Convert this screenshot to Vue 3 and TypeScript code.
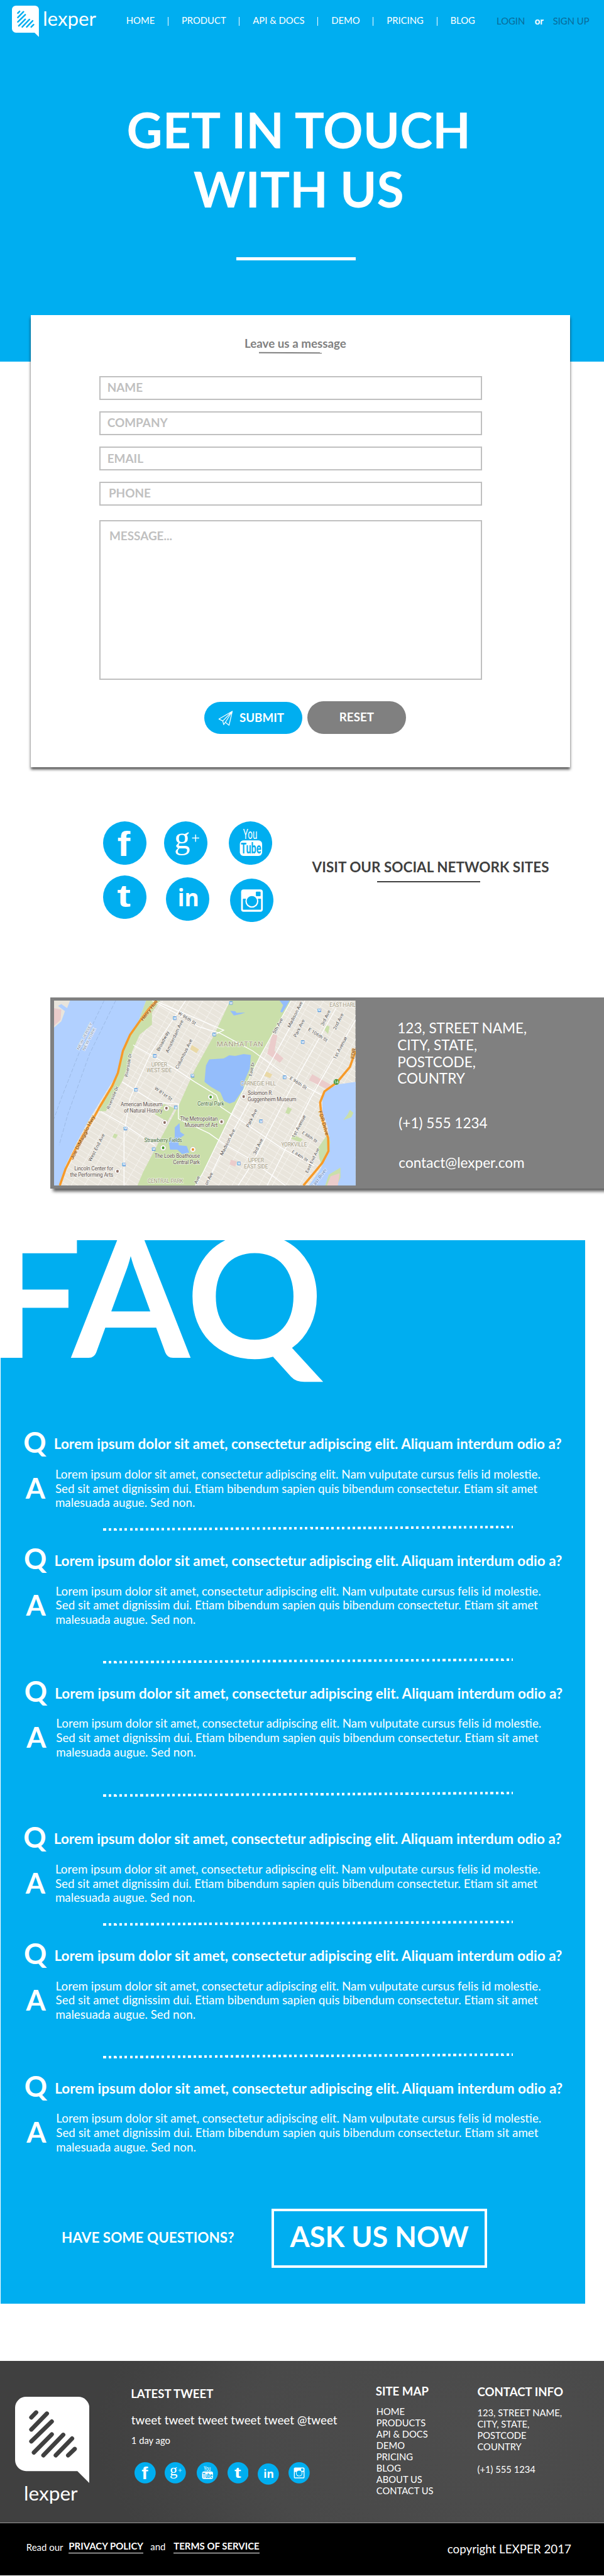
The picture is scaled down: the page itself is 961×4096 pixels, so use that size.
<script setup lang="ts">
import { defineComponent, h } from 'vue'

type Point = [number, number]
interface MapLabel {
  text: string
  from: Point
  to: Point
  tone: string
  size: number
}
interface Place {
  lines: string[]
  x: number
  y: number
  anchor: 'start' | 'middle' | 'end'
  tone: string
}

const nav: string[] = ['HOME', 'PRODUCT', 'API & DOCS', 'DEMO', 'PRICING', 'BLOG']
const fields: string[] = ['NAME', 'COMPANY', 'EMAIL', 'PHONE']
const networks: string[] = ['facebook', 'google', 'youtube', 'tumblr', 'linkedin', 'instagram']
const siteMap: string[] = ['HOME', 'PRODUCTS', 'API & DOCS', 'DEMO', 'PRICING', 'BLOG', 'ABOUT US', 'CONTACT US']
const spacing: string[] = ['tight', 'loose', 'wide', 'tight', 'loose', 'last']
const question = 'Lorem ipsum dolor sit amet, consectetur adipiscing elit. Aliquam interdum odio a?'
const answer: string[] = [
  'Lorem ipsum dolor sit amet, consectetur adipiscing elit. Nam vulputate cursus felis id molestie.',
  'Sed sit amet dignissim dui. Etiam bibendum sapien quis bibendum consectetur. Etiam sit amet',
  'malesuada augue. Sed non.',
]

const blue = '#00aef0'
const stripes: [number, number, number, number][] = [
  [36.7, 46.8, 47.7, 35.5],
  [36.7, 74, 72, 38],
  [36.7, 101, 83, 56],
  [42.5, 126, 83, 85],
  [64, 132.5, 109, 86],
  [92, 132.5, 129, 94.5],
  [120, 132.5, 135, 118],
]

const BubbleMark = defineComponent({
  props: { ink: { type: String, required: true } },
  setup(props) {
    return () =>
      h('svg', { viewBox: '0 0 168 195' }, [
        h('path', {
          d: 'M25 0H143A25 25 0 0 1 168 25V195L141 168H25A25 25 0 0 1 0 143V25A25 25 0 0 1 25 0Z',
          fill: '#fff',
        }),
        ...stripes.map(([x1, y1, x2, y2]) =>
          h('line', { x1, y1, x2, y2, stroke: props.ink, 'stroke-width': 9.6, 'stroke-linecap': 'round' }),
        ),
      ])
  },
})

const letter = (content: string, attrs: Record<string, string | number>) =>
  h('text', { fill: '#fff', ...attrs }, content)

const SocialIcon = defineComponent({
  props: { name: { type: String, required: true } },
  setup(props) {
    const art = () => {
      switch (props.name) {
        case 'facebook':
          return [letter('f', { transform: 'translate(97 235) scale(1.13 1)', 'font-family': 'Liberation Sans', 'font-weight': 700, 'font-size': 234 })]
        case 'google':
          return [
            letter('g', { x: 69, y: 181, 'font-family': 'Liberation Serif', 'font-size': 216 }),
            h('path', { d: 'M190 113H238M214 89V138', stroke: '#fff', 'stroke-width': 6 }),
          ]
        case 'youtube':
          return [
            letter('You', { x: 97, y: 118, 'font-family': 'Roboto', 'font-size': 92, textLength: 96, lengthAdjust: 'spacingAndGlyphs' }),
            h('rect', { x: 75, y: 129, width: 151, height: 105, rx: 24, fill: '#fff' }),
            letter('Tube', { x: 81, y: 216, fill: blue, 'font-family': 'Roboto', 'font-weight': 700, 'font-size': 99, textLength: 138, lengthAdjust: 'spacingAndGlyphs' }),
          ]
        case 'tumblr':
          return [letter('t', { transform: 'translate(96 215) scale(1.28 1)', 'font-family': 'Liberation Sans', 'font-weight': 700, 'font-size': 216 })]
        case 'linkedin':
          return [letter('in', { x: 80, y: 197, 'font-family': 'Open Sans', 'font-weight': 700, 'font-size': 158, textLength: 145, lengthAdjust: 'spacingAndGlyphs' })]
        default:
          return [
            h('rect', { x: 75, y: 73, width: 147, height: 152, rx: 17, fill: '#fff' }),
            h('rect', { x: 87, y: 136, width: 123, height: 75, rx: 3, fill: blue }),
            h('circle', { cx: 148, cy: 153, r: 44, fill: '#fff' }),
            h('circle', { cx: 148, cy: 153, r: 35, fill: blue }),
            h('rect', { x: 175, y: 88, width: 32, height: 31, rx: 5, fill: blue }),
          ]
      }
    }
    return () => h('svg', { viewBox: '0 0 294 294', role: 'img' }, [h('circle', { cx: 147, cy: 147, r: 147, fill: blue }), ...art()])
  },
})

// Map features are kept on a survey grid and projected onto the 682 x 418 canvas.
const project = ([x, y]: Point): Point => [(x - 52) * 0.8202, (y - 99) / 3]
const trace = (...points: Point[]): string =>
  'M' + points.map((p) => project(p).map((n) => n.toFixed(1)).join(' ')).join('L')

const streets: string[] = []
for (let y = -1100; y < 1400; y += 42) streets.push(trace([52, y], [884, y + 1260]))
const avenues: string[] = []
for (let x = 130; x < 1180; x += 37) avenues.push(trace([x, 99], [x - 290, 1353]))

const hudson = trace([52, 99], [306, 99], [285, 240], [250, 400], [228, 590], [185, 760], [150, 900], [115, 1060], [85, 1210], [66, 1353], [52, 1353])
const jersey = trace([52, 99], [96, 99], [88, 150], [72, 122], [63, 135], [82, 170], [72, 240], [52, 282])
const shore = trace([306, 99], [345, 99], [322, 180], [322, 262], [288, 330], [268, 440], [250, 590], [238, 655], [222, 720], [195, 850], [176, 850], [208, 690], [228, 590], [250, 400], [285, 240])
const park = trace([538, 99], [706, 99], [665, 290], [622, 470], [590, 640], [545, 850], [505, 1050], [462, 1270], [442, 1353], [282, 1353], [298, 1260], [345, 1040], [398, 800], [440, 570], [492, 340])
const reservoir = trace([480, 498], [520, 492], [535, 470], [552, 475], [575, 462], [595, 468], [592, 560], [578, 640], [574, 700], [550, 785], [536, 797], [521, 780], [511, 722], [485, 685], [467, 650], [471, 540])
const lake = trace([398, 930], [400, 990], [412, 1010], [395, 1040], [396, 1080], [418, 1085], [425, 1130], [405, 1140], [392, 1110], [372, 1110], [368, 1050], [385, 1030], [385, 960])
const meer = trace([674, 99], [702, 99], [692, 140], [682, 180], [676, 175], [684, 130])
const pool = trace([538, 168], [552, 172], [555, 182], [580, 180], [565, 192], [548, 200])
const eastRiver = trace([884, 650], [832, 668], [800, 712], [792, 760], [792, 850], [806, 950], [812, 1040], [808, 1140], [785, 1250], [755, 1353], [884, 1353])
const island = trace([842, 1232], [842, 1300], [832, 1353], [800, 1353], [810, 1280])
const promenade = trace([808, 1000], [814, 1060], [808, 1140], [790, 1220], [784, 1170], [780, 1100])

const westHighway = trace([335, 99], [312, 160], [288, 240], [262, 330], [242, 440], [228, 590], [212, 680], [178, 820], [160, 900], [132, 1010], [104, 1140], [84, 1240], [68, 1353])
const fdr = trace([884, 440], [868, 550], [832, 655], [798, 715], [786, 790], [790, 890], [808, 1030], [809, 1120], [792, 1200], [765, 1280], [740, 1353])
const mainRoads: string[] = [
  trace([322, 99], [400, 200], [450, 275], [510, 320], [600, 440], [700, 620], [790, 740]),
  trace([415, 99], [320, 450], [262, 760], [245, 1000], [245, 1353]),
  trace([240, 650], [330, 790], [395, 800], [395, 900], [480, 1000], [520, 1070], [590, 1170], [690, 1353]),
  trace([270, 400], [385, 560], [440, 650], [500, 740], [512, 820], [560, 900], [680, 1100], [770, 1220]),
  trace([180, 850], [245, 940], [330, 1080]),
  trace([706, 99], [622, 470], [545, 850], [462, 1270], [442, 1353]),
  trace([744, 99], [640, 560], [520, 1100], [470, 1353]),
  trace([830, 150], [700, 720], [600, 1200], [560, 1353]),
  trace([884, 230], [760, 760], [640, 1353]),
  trace([340, 110], [520, 300], [495, 330]),
]
const patches: { d: string; fill: string }[] = [
  { d: trace([52, 150], [72, 160], [70, 230], [52, 270]), fill: '#ebcccb' },
  { d: trace([654, 325], [668, 335], [660, 440], [685, 490], [675, 520], [640, 460]), fill: '#ebcccb' },
  { d: trace([764, 598], [815, 670], [805, 700], [755, 640]), fill: '#ebcccb' },
  { d: trace([540, 1178], [556, 1190], [552, 1225], [536, 1210]), fill: '#ebcccb' },
  { d: trace([815, 1290], [840, 1270], [835, 1353], [805, 1353]), fill: '#ebcccb' },
  { d: trace([432, 400], [452, 430], [445, 455], [428, 430]), fill: '#ead9a6' },
  { d: trace([638, 580], [654, 600], [648, 625], [632, 610]), fill: '#ead9a6' },
  { d: trace([355, 800], [385, 830], [365, 920], [330, 870]), fill: '#cadfaa' },
  { d: trace([697, 820], [708, 835], [700, 870], [690, 860]), fill: '#cadfaa' },
  { d: trace([218, 1000], [228, 1010], [222, 1035], [213, 1025]), fill: '#cadfaa' },
  { d: trace([712, 1010], [738, 1040], [730, 1060], [706, 1035]), fill: '#cadfaa' },
  { d: trace([802, 265], [812, 275], [808, 325], [798, 300]), fill: '#cadfaa' },
  { d: trace([868, 840], [878, 860], [872, 890], [850, 910], [862, 870]), fill: '#cadfaa' },
]

const labels: MapLabel[] = [
  { text: 'Henry Hud', from: [297, 238], to: [338, 105], tone: 'road', size: 10.5 },
  { text: 'Joe DiMaggio Hwy', from: [104, 1180], to: [165, 885], tone: 'road', size: 10.5 },
  { text: 'FDR Drive', from: [782, 850], to: [802, 1015], tone: 'road', size: 10.5 },
  { text: 'FDR', from: [880, 495], to: [884, 425], tone: 'road', size: 10.5 },
  { text: 'W 96th St', from: [393, 190], to: [440, 265], tone: 'street', size: 10 },
  { text: 'W 81st St', from: [328, 700], to: [374, 780], tone: 'street', size: 10 },
  { text: 'E 106th St', from: [752, 300], to: [803, 380], tone: 'street', size: 10 },
  { text: 'E 96th St', from: [701, 630], to: [746, 703], tone: 'street', size: 10 },
  { text: 'E 88th St', from: [735, 1000], to: [775, 1064], tone: 'street', size: 9 },
  { text: 'E 84th St', from: [707, 1128], to: [749, 1192], tone: 'street', size: 9 },
  { text: 'Broadway', from: [342, 445], to: [370, 312], tone: 'street', size: 10.5 },
  { text: 'Amsterdam Ave', from: [367, 455], to: [409, 237], tone: 'street', size: 10.5 },
  { text: 'Columbus Ave', from: [394, 565], to: [434, 368], tone: 'street', size: 10.5 },
  { text: 'Riverside Dr', from: [255, 617], to: [266, 458], tone: 'street', size: 9.5 },
  { text: 'Riverside Dr', from: [204, 838], to: [230, 685], tone: 'street', size: 9.5 },
  { text: 'West End Ave', from: [154, 1193], to: [192, 1010], tone: 'street', size: 10.5 },
  { text: '5th Ave', from: [662, 327], to: [684, 225], tone: 'street', size: 10.5 },
  { text: 'Madison Ave', from: [703, 285], to: [738, 113], tone: 'street', size: 10.5 },
  { text: 'Park Ave', from: [720, 350], to: [744, 233], tone: 'street', size: 10.5 },
  { text: '3rd Ave', from: [795, 273], to: [815, 170], tone: 'street', size: 10.5 },
  { text: '2nd Ave', from: [829, 300], to: [851, 192], tone: 'street', size: 10.5 },
  { text: '1st Avenue', from: [829, 500], to: [861, 350], tone: 'street', size: 10.5 },
  { text: 'East Dr', from: [597, 612], to: [605, 518], tone: 'street', size: 9.5 },
  { text: 'Park Ave', from: [589, 962], to: [613, 842], tone: 'street', size: 10.5 },
  { text: 'Madison Ave', from: [517, 1152], to: [552, 978], tone: 'street', size: 10.5 },
  { text: '3rd Ave', from: [608, 1145], to: [629, 1042], tone: 'street', size: 10.5 },
  { text: '1st Avenue', from: [715, 1033], to: [747, 883], tone: 'street', size: 10.5 },
  { text: 'East End Ave', from: [752, 1270], to: [784, 1106], tone: 'street', size: 9.5 },
  { text: 'Ave', from: [446, 1345], to: [455, 1295], tone: 'street', size: 10.5 },
  { text: 'on Ave', from: [475, 1353], to: [491, 1270], tone: 'street', size: 10.5 },
  { text: 'East River', from: [768, 1370], to: [805, 1248], tone: 'water', size: 10.5 },
  { text: 'NEW JERSEY', from: [121, 435], to: [158, 255], tone: 'border', size: 8.5 },
  { text: 'NEW YORK', from: [136, 440], to: [167, 290], tone: 'border', size: 8.5 },
]
const placedLabels = labels.map((label) => {
  const [x1, y1] = project(label.from)
  const [x2, y2] = project(label.to)
  return {
    ...label,
    length: Math.hypot(x2 - x1, y2 - y1),
    transform: `translate(${x1.toFixed(1)} ${y1.toFixed(1)}) rotate(${((Math.atan2(y2 - y1, x2 - x1) * 180) / Math.PI).toFixed(1)})`,
  }
})

const place = (x: number, y: number, anchor: Place['anchor'], tone: string, ...lines: string[]): Place => {
  const [px, py] = project([x, y])
  return { x: px, y: py, anchor, tone, lines }
}
const places: Place[] = [
  place(565, 412, 'middle', 'area big', 'MANHATTAN'),
  place(812, 140, 'start', 'area', 'EAST HARL'),
  place(342, 545, 'middle', 'area', 'UPPER', 'WEST SIDE'),
  place(615, 676, 'middle', 'area', 'CARNEGIE HILL'),
  place(714, 1087, 'middle', 'area', 'YORKVILLE'),
  place(609, 1197, 'middle', 'area', 'UPPER', 'EAST SIDE'),
  place(359, 1335, 'middle', 'area', 'CENTRAL PARK'),
  place(586, 739, 'start', 'spot', 'Solomon R.', 'Guggenheim Museum'),
  place(484, 811, 'middle', 'spot green', 'Central Park'),
  place(351, 817, 'end', 'spot', 'American Museum', 'of Natural History'),
  place(503, 914, 'end', 'spot', 'The Metropolitan', 'Museum of Art'),
  place(353, 1060, 'middle', 'spot green', 'Strawberry Fields'),
  place(454, 1167, 'end', 'spot', 'The Loeb Boathouse', 'Central Park'),
  place(215, 1250, 'end', 'spot', 'Lincoln Center for', 'the Performing Arts'),
]
const stations: Point[] = (
  [[540, 115], [385, 218], [494, 329], [330, 474], [434, 609], [278, 704], [388, 823], [249, 967], [327, 1107], [245, 1211], [784, 165], [738, 380], [688, 619], [623, 917], [562, 1204]] as Point[]
).map(project)
const pins: { at: Point; ink: string }[] = [
  { at: project([484, 753]), ink: '#4a9c2d' },
  { at: project([353, 1098]), ink: '#4a9c2d' },
  { at: project([435, 1109]), ink: '#e8902c' },
  { at: project([575, 750]), ink: '#8d6e63' },
  { at: project([362, 829]), ink: '#8d6e63' },
  { at: project([357, 926]), ink: '#8d6e63' },
  { at: project([514, 921]), ink: '#8d6e63' },
  { at: project([227, 1257]), ink: '#8d6e63' },
]
</script>

<template>
  <div class="page">
    <header class="hero">
      <div class="topbar">
        <a class="brand">
          <BubbleMark class="brand-mark" :ink="blue" />
          <span class="brand-name">lexper</span>
        </a>
        <nav class="menu">
          <a v-for="item in nav" :key="item">{{ item }}</a>
        </nav>
        <div class="account"><a>LOGIN</a><b>or</b><a>SIGN UP</a></div>
      </div>
      <h1>GET IN TOUCH<br />WITH US</h1>
      <div class="hero-rule"></div>
    </header>

    <main>
      <section class="card">
        <h2 class="card-title">Leave us a message</h2>
        <div class="card-rule"></div>
        <form class="form" @submit.prevent>
          <label v-for="field in fields" :key="field" class="field" :class="'field-' + field.toLowerCase()"><span>{{ field }}</span></label>
          <label class="field field-message"><span>MESSAGE...</span></label>
          <div class="actions">
            <button class="submit" type="submit">
              <svg viewBox="0 0 34 36"><path d="M32.5 1.5L1.5 19.5L10.5 24L32.5 1.5L25 34L16.5 27L12.5 32.5L10.5 24M16.5 27L32.5 1.5" /></svg>
              <span>SUBMIT</span>
            </button>
            <button class="reset" type="reset"><span>RESET</span></button>
          </div>
        </form>
      </section>

      <section class="social">
        <div class="social-grid">
          <SocialIcon v-for="name in networks" :key="name" :name="name" :class="name" />
        </div>
        <div class="visit">
          <h2>VISIT OUR SOCIAL NETWORK SITES</h2>
          <div class="visit-rule"></div>
        </div>
      </section>

      <section class="contact">
        <svg class="map" viewBox="0 0 682 418">
          <rect width="682" height="418" fill="#e9e5dc" />
          <g class="grid-lines">
            <path v-for="(d, i) in streets" :key="'s' + i" :d="d" />
            <path v-for="(d, i) in avenues" :key="'a' + i" :d="d" />
          </g>
          <path v-for="(patch, i) in patches.slice(1)" :key="'p' + i" :d="patch.d" :fill="patch.fill" />
          <path :d="park" fill="#cadfaa" />
          <path :d="hudson" fill="#b1d0ff" />
          <path :d="jersey" fill="#e9e5dc" />
          <path :d="patches[0].d" :fill="patches[0].fill" />
          <path :d="shore" fill="#cadfaa" />
          <path :d="eastRiver" fill="#b1d0ff" />
          <path :d="island" fill="#cadfaa" />
          <path :d="patches[4].d" :fill="patches[4].fill" />
          <path :d="patches[12].d" :fill="patches[12].fill" />
          <path :d="promenade" fill="#cadfaa" />
          <g class="ferry">
            <path :d="trace([222, 99], [150, 460], [90, 870], [66, 1080])" />
            <path :d="trace([190, 99], [120, 460], [66, 800], [52, 900])" />
          </g>
          <g class="roads"><path v-for="(d, i) in mainRoads" :key="'r' + i" :d="d" /></g>
          <path v-for="(d, i) in [reservoir, lake, meer, pool]" :key="'w' + i" :d="d" fill="#94bdfb" />
          <g class="highway"><path :d="westHighway" /><path :d="fdr" /></g>
          <g v-for="(s, i) in stations" :key="'m' + i">
            <rect :x="s[0] - 4" :y="s[1] - 4" width="8" height="8" rx="1" fill="#5b9bdc" />
            <text :x="s[0]" :y="s[1] + 2.6" class="metro">M</text>
          </g>
          <g v-for="(pin, i) in pins" :key="'n' + i">
            <circle :cx="pin.at[0]" :cy="pin.at[1]" r="6.2" fill="#fff" stroke="#b9b3a6" stroke-width=".7" />
            <rect :x="pin.at[0] - 2.6" :y="pin.at[1] - 3" width="5.2" height="6" rx="1.6" :fill="pin.ink" />
          </g>
          <text
            v-for="(label, i) in placedLabels"
            :key="'l' + i"
            :class="['label', label.tone]"
            :transform="label.transform"
            :font-size="label.size"
            :textLength="label.length"
            lengthAdjust="spacingAndGlyphs"
          >{{ label.text }}</text>
          <text v-for="(p, i) in places" :key="'t' + i" :class="['label', p.tone]" :text-anchor="p.anchor">
            <tspan v-for="(line, n) in p.lines" :key="line" :x="p.x" :y="p.y + n * 14">{{ line }}</tspan>
          </text>
          <circle cx="639" cy="184" r="6.5" fill="#4f9a3d" />
          <text x="639" y="187.5" class="shield">14</text>
        </svg>
        <div class="details">
          <p>123, STREET NAME,<br />CITY, STATE,<br />POSTCODE,<br />COUNTRY</p>
          <p class="details-phone">(+1) 555 1234</p>
          <p class="details-mail">contact@lexper.com</p>
        </div>
      </section>

      <section class="faq">
        <h2>FAQ</h2>
        <template v-for="(gap, i) in spacing" :key="i">
          <article class="item" :class="'shift-' + (i % 3)">
            <span class="mark">Q</span>
            <h3>{{ question }}</h3>
            <span class="mark answer-mark">A</span>
            <p><template v-for="(line, n) in answer" :key="n">{{ line }}<br v-if="n < 2" /></template></p>
          </article>
          <div v-if="gap !== 'last'" class="dots" :class="gap"></div>
        </template>
        <div class="ask">
          <p>HAVE SOME QUESTIONS?</p>
          <a>ASK US NOW</a>
        </div>
      </section>
    </main>

    <footer>
      <div class="foot">
        <div class="foot-brand">
          <BubbleMark class="foot-mark" ink="#404040" />
          <span>lexper</span>
        </div>
        <div class="tweets">
          <h4>LATEST TWEET</h4>
          <p class="tweet">tweet tweet tweet tweet tweet @tweet</p>
          <p class="when">1 day ago</p>
          <div class="mini">
            <SocialIcon v-for="name in networks" :key="name" :name="name" :class="name" />
          </div>
        </div>
        <div class="sitemap">
          <h4>SITE MAP</h4>
          <ul><li v-for="item in siteMap" :key="item">{{ item }}</li></ul>
        </div>
        <div class="info">
          <h4>CONTACT INFO</h4>
          <p>123, STREET NAME,<br />CITY, STATE,<br />POSTCODE<br />COUNTRY</p>
          <p class="info-phone">(+1) 555 1234</p>
        </div>
      </div>
      <div class="legal">
        <span class="read">Read our</span>
        <a class="privacy">PRIVACY POLICY</a>
        <span class="and">and</span>
        <a class="terms">TERMS OF SERVICE</a>
        <span class="copy">copyright LEXPER 2017</span>
      </div>
    </footer>
  </div>
</template>

<style>
body {
  margin: 0;
  background: #fff;
}
</style>

<style scoped>
.page {
  zoom: 0.7032;
  height: 5824px;
  overflow: hidden;
  background: #fff;
  color: #fff;
  font-family: Lato, 'Open Sans', sans-serif;
  line-height: 1.2;
}
h1, h2, h3, h4, p, ul { margin: 0; padding: 0; font-size: inherit; }
li { list-style: none; }
svg { display: block; flex: none; }

/* Hero */
.hero { height: 818px; background: #00aef0; overflow: hidden; }
.topbar { display: flex; align-items: flex-start; height: 100px; white-space: nowrap; }
.brand { display: flex; margin: 12.6px 0 0 27px; width: 258.5px; }
.brand-mark { width: 61px; height: 70.8px; }
.brand-name { margin: 3.5px 0 0 9px; font-size: 44.5px; }
.menu { display: flex; margin-top: 34.5px; width: 838px; font-size: 21.1px; }
.menu a + a { display: flex; }
.menu a + a::before { content: ''; width: 1.5px; height: 20px; margin: 4px 29.6px 0 29.5px; background: #fff; }
.account { display: flex; margin-top: 36.2px; font-size: 21.1px; color: #0a6b98; }
.account b { color: #fff; margin: 0 21px 0 22px; }
h1 { margin: 126.7px 15px 0 0; text-align: center; font-size: 112px; line-height: 133.7px; font-weight: 700; }
.hero-rule { width: 270px; height: 6px; margin: 88px 0 0 535px; background: #fff; }

/* Message form */
.card {
  position: relative;
  box-sizing: border-box;
  width: 1219.6px;
  height: 1021.3px;
  margin: -105px 0 0 69.7px;
  padding-top: 47.5px;
  background: #fff;
  box-shadow: 0 5px 6px rgba(0, 0, 0, 0.7);
}
.card-title { width: 1197px; text-align: center; font-size: 26.7px; line-height: 32.4px; font-weight: 700; color: #808080; }
.card-rule { width: 142px; height: 3px; margin: 3.6px 0 0 515.7px; background: #808080; transform: rotate(0.3deg); }
.form { margin: 51px 0 0 154.4px; width: 866px; }
.field {
  display: block;
  box-sizing: border-box;
  height: 54px;
  margin-bottom: 25.6px;
  padding: 6.3px 0 0 15.8px;
  border: 3px solid #c0c0c0;
  font-size: 26.9px;
  line-height: 32.9px;
  font-weight: 700;
  color: #c0c0c0;
}
.field-company { padding-top: 5.3px; }
.field-email { padding-top: 7.4px; }
.field-phone { padding: 5.6px 0 0 19px; }
.field-message { height: 361.5px; margin: 33px 0 0 1px; padding: 15.4px 0 0 19.5px; }
.actions { display: flex; align-items: flex-end; gap: 10.2px; margin: 48px 0 0 238.6px; }
button {
  display: flex;
  align-items: flex-start;
  padding: 0;
  border: 0;
  border-radius: 37px;
  color: #fff;
  font: 700 26.7px/32.4px Lato, sans-serif;
}
.submit { width: 222px; height: 72px; background: #00aef0; }
.submit svg { width: 34px; height: 35px; margin: 19px 14px 0 31px; fill: none; stroke: #fff; stroke-width: 1.8; stroke-linejoin: round; }
.submit span { margin-top: 19.6px; }
.reset { width: 224px; height: 73.7px; background: #808080; justify-content: center; }
.reset span { margin-top: 20.1px; }

/* Social networks */
.social { display: flex; height: 521.7px; }
.social-grid {
  display: grid;
  grid-template-columns: 139px 146.5px 100px;
  grid-template-rows: 122.3px 110px;
  margin: 122.7px 0 0 232.7px;
  width: 473.5px;
  flex: none;
}
.social-grid svg { width: 98.2px; height: 98.2px; }
.social-grid .linkedin { margin: 4.4px 0 0 4.4px; }
.social-grid .instagram { margin: 7.5px 0 0 2.9px; }
.visit { margin-top: 207px; color: #404040; font-size: 32px; white-space: nowrap; }
.visit-rule { width: 234px; height: 3px; margin: 12.9px 0 0 147px; background: #404040; }

/* Map and address */
.contact {
  display: flex;
  height: 431.7px;
  margin-left: 113.6px;
  margin-right: -10px;
  background: #808080;
  box-shadow: 6px 7px 7px rgba(0, 0, 0, 0.65);
}
.map { width: 682px; height: 418px; margin: 7px 0 0 9px; }
.grid-lines path { fill: none; stroke: #fbfaf7; stroke-width: 1; }
.roads path { fill: none; stroke: #fff; stroke-width: 1.9; }
.ferry path { fill: none; stroke: #8ba7d1; stroke-width: 0.8; stroke-dasharray: 9 4; }
.highway path { fill: none; stroke: #f79a28; stroke-width: 5; stroke-linejoin: round; }
.label { font-family: Roboto, sans-serif; paint-order: stroke; stroke: #fff; stroke-opacity: 0.75; stroke-width: 2px; stroke-linejoin: round; }
.label.street { fill: #55524d; }
.label.road { fill: #7d4712; stroke: #fbc57c; }
.label.water { fill: #5b7fb4; }
.label.border { fill: #8d99ab; }
.label.area { fill: #a39a80; font-size: 12px; letter-spacing: -0.3px; }
.label.area.big { font-size: 16.5px; letter-spacing: 0.6px; }
.label.spot { fill: #5d4f48; font-size: 11.6px; letter-spacing: -0.2px; }
.label.spot.green { fill: #3f6b35; }
.metro { font: 700 7px Roboto, sans-serif; fill: #fff; text-anchor: middle; }
.shield { font: 9px Roboto, sans-serif; fill: #fff; text-anchor: middle; }
.details { margin: 50.5px 0 0 94.5px; font-size: 32.1px; line-height: 38.2px; white-space: nowrap; }
.details-phone { margin: 62px 0 0 3px; }
.details-mail { margin: 51.8px 0 0 3px; }

/* Questions */
.faq { width: 1323.5px; height: 2405px; margin: 116.3px 0 0 1px; background: #00aef0; overflow: hidden; white-space: nowrap; }
.faq h2 { margin: -30.6px 0 155.6px -33px; height: 300px; font-size: 384px; line-height: 300px; }
.item {
  display: grid;
  grid-template-columns: 69px 1fr;
  grid-template-rows: 64px 121.3px;
  margin-left: 52px;
}
.shift-1 { transform: translateX(1px); }
.shift-2 { transform: translateX(2px); }
.mark { font-size: 64px; line-height: 64px; font-weight: 700; }
.answer-mark { margin: 40px 0 0 5px; }
.item h3 { margin-top: 18px; font-size: 32px; line-height: 38px; font-weight: 700; }
.item p { margin: 24.8px 0 0 3px; font-size: 26.75px; line-height: 32.15px; }
.dots {
  width: 928px;
  height: 6px;
  margin-left: 230.7px;
  background: repeating-linear-gradient(90deg, transparent 0 2px, #fff 2px 8px, transparent 8px 12px);
  transform: rotate(-0.37deg);
}
.dots.tight { margin-top: 38.9px; margin-bottom: 34.1px; }
.dots.loose { margin-top: 74.6px; margin-bottom: 33.5px; }
.dots.wide { margin-top: 76.5px; margin-bottom: 61.7px; }
.ask { display: flex; align-items: flex-start; margin: 123.7px 0 0 138.5px; }
.ask p { width: 475.5px; margin-top: 45.3px; font-size: 32px; font-weight: 700; }
.ask a {
  box-sizing: border-box;
  width: 487px;
  height: 133px;
  padding-top: 18.8px;
  border: 6px solid #fff;
  text-align: center;
  font-size: 64px;
  font-weight: 700;
}

/* Footer */
footer { margin-top: 130px; white-space: nowrap; }
.foot {
  display: grid;
  grid-template-columns: 262px 554px 230px 1fr;
  height: 364.5px;
  padding-left: 34px;
  background: radial-gradient(ellipse 62% 130% at 78% 45%, #4d4d4d 0%, #494949 60%, #404040 100%);
}
.foot-mark { width: 168px; height: 195px; margin-top: 80px; }
.foot-brand span { display: block; margin: -2px 0 0 20px; font-size: 45px; }
h4 { font-size: 26.5px; font-weight: 700; }
.tweets { padding-top: 57.5px; }
.tweet { margin: 28.4px 0 0 1px; font-size: 26.8px; }
.when { margin: 17px 0 0 1px; font-size: 21px; line-height: 24.6px; }
.mini { display: flex; margin: 37px 0 0 9px; }
.mini svg { width: 48px; height: 48px; margin-right: 20.3px; }
.mini .google { margin-right: 23.5px; }
.mini .youtube { margin-right: 21.5px; }
.mini .tumblr { margin-top: 0.7px; margin-right: 21.5px; }
.mini .linkedin { margin-top: 2.7px; margin-right: 21px; }
.mini .instagram { margin-top: 0.7px; }
.sitemap { padding-top: 52px; }
.sitemap ul { margin: 17px 0 0 1.5px; font-size: 21px; line-height: 25.6px; }
.info { padding-top: 52.9px; }
.info p { margin-top: 18px; font-size: 21px; line-height: 25.6px; }
.info .info-phone { margin-top: 25.6px; }
.legal { display: flex; align-items: flex-start; height: 121px; border-top: 1px solid #999; background: #000; font-size: 21.3px; line-height: 24.6px; }
.read { margin: 43px 0 0 59.5px; width: 96px; }
.legal a { margin-top: 41px; height: 26.5px; border-bottom: 2px solid #fff; font-weight: 700; }
.and { margin: 41.5px 18px 0 16px; }
.copy { margin: 42.5px 74px 0 auto; font-size: 26.7px; line-height: 31px; }
</style>
